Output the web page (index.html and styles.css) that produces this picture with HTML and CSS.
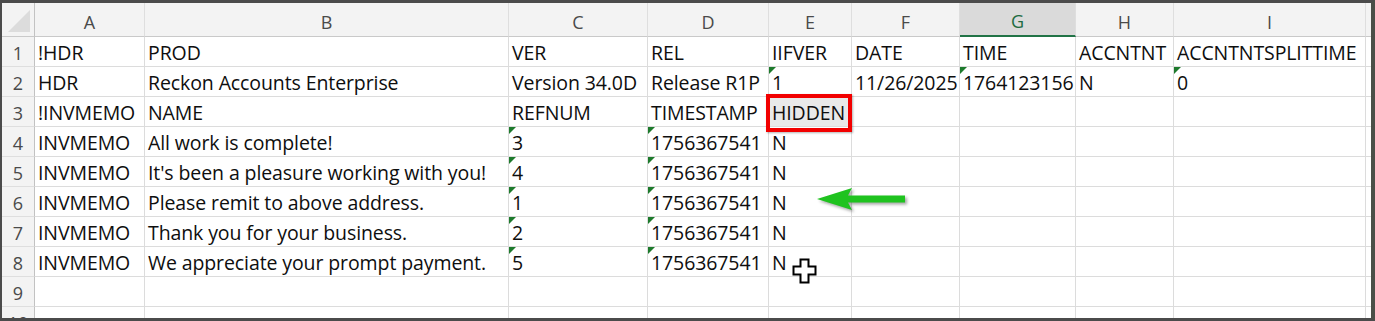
FILE: index.html
```html
<!DOCTYPE html>
<html>
<head>
<meta charset="utf-8">
<link rel="stylesheet" href="styles.css">
</head>
<body>
<div class="frame">
  <div class="sheet">
    <div class="c h corner"></div><div class="c h">A</div><div class="c h">B</div><div class="c h">C</div><div class="c h">D</div><div class="c h">E</div><div class="c h">F</div><div class="c h sel">G</div><div class="c h">H</div><div class="c h">I</div><div class="c h"></div>

    <div class="c rn">1</div><div class="c">!HDR</div><div class="c">PROD</div><div class="c">VER</div><div class="c">REL</div><div class="c">IIFVER</div><div class="c">DATE</div><div class="c">TIME</div><div class="c">ACCNTNT</div><div class="c">ACCNTNTSPLITTIME</div><div class="c"></div>

    <div class="c rn">2</div><div class="c">HDR</div><div class="c">Reckon Accounts Enterprise</div><div class="c">Version 34.0D</div><div class="c">Release R1P</div><div class="c tri">1</div><div class="c">11/26/2025</div><div class="c tri">1764123156</div><div class="c">N</div><div class="c tri">0</div><div class="c"></div>

    <div class="c rn">3</div><div class="c">!INVMEMO</div><div class="c">NAME</div><div class="c">REFNUM</div><div class="c">TIMESTAMP</div><div class="c marked">HIDDEN</div><div class="c"></div><div class="c"></div><div class="c"></div><div class="c"></div><div class="c"></div>

    <div class="c rn">4</div><div class="c">INVMEMO</div><div class="c">All work is complete!</div><div class="c tri">3</div><div class="c tri">1756367541</div><div class="c">N</div><div class="c"></div><div class="c"></div><div class="c"></div><div class="c"></div><div class="c"></div>

    <div class="c rn">5</div><div class="c">INVMEMO</div><div class="c">It's been a pleasure working with you!</div><div class="c tri">4</div><div class="c tri">1756367541</div><div class="c">N</div><div class="c"></div><div class="c"></div><div class="c"></div><div class="c"></div><div class="c"></div>

    <div class="c rn">6</div><div class="c">INVMEMO</div><div class="c">Please remit to above address.</div><div class="c tri">1</div><div class="c tri">1756367541</div><div class="c">N</div><div class="c"></div><div class="c"></div><div class="c"></div><div class="c"></div><div class="c"></div>

    <div class="c rn">7</div><div class="c">INVMEMO</div><div class="c">Thank you for your business.</div><div class="c tri">2</div><div class="c tri">1756367541</div><div class="c">N</div><div class="c"></div><div class="c"></div><div class="c"></div><div class="c"></div><div class="c"></div>

    <div class="c rn">8</div><div class="c">INVMEMO</div><div class="c">We appreciate your prompt payment.</div><div class="c tri">5</div><div class="c tri">1756367541</div><div class="c">N</div><div class="c"></div><div class="c"></div><div class="c"></div><div class="c"></div><div class="c"></div>

    <div class="c rn">9</div><div class="c"></div><div class="c"></div><div class="c"></div><div class="c"></div><div class="c"></div><div class="c"></div><div class="c"></div><div class="c"></div><div class="c"></div><div class="c"></div>

    <div class="c rn">10</div><div class="c"></div><div class="c"></div><div class="c"></div><div class="c"></div><div class="c"></div><div class="c"></div><div class="c"></div><div class="c"></div><div class="c"></div><div class="c"></div>
  </div>

  <div class="redbox"></div>

  <svg class="arrow" width="94" height="30" viewBox="0 0 94 30">
    <path d="M1 13 L36 2 L32 9.5 L89 9.5 L89 16.5 L32 16.5 L36 24 Z" fill="#1fc31f"/>
  </svg>

  <svg class="cursor" width="26" height="27" viewBox="0 0 26 27">
    <path d="M8.5 1.5 H16.5 V8.5 H23.5 V16.5 H16.5 V24.5 H8.5 V16.5 H1.5 V8.5 H8.5 Z" fill="#fff" stroke="#000" stroke-width="2" stroke-linejoin="miter"/>
  </svg>
</div>
</body>
</html>
```

FILE: styles.css
```css
body {
  margin: 0;
  background: #4d4d4d;
}

.frame {
  position: relative;
  width: 1375px;
  height: 321px;
  box-sizing: border-box;
  border-style: solid;
  border-color: #4b4b4b #4a4f48 #4b4b4b #4b4b4b;
  border-width: 3px 4px 3px 2px;
  background: #ffffff;
  overflow: hidden;
}

.sheet {
  display: grid;
  grid-template-columns: 33px 110px 364px 139px 121px 83px 108px 116px 98px 192px 5px;
  grid-template-rows: 34px;
  grid-auto-rows: 30px;
  font-family: "Open Sans", "Noto Sans", sans-serif;
}

.c {
  position: relative;
  box-sizing: border-box;
  display: flex;
  align-items: flex-end;
  padding: 0 3px;
  border-right: 1px solid #dcdcdc;
  border-bottom: 1px solid #dcdcdc;
  font-size: 19.5px;
  line-height: 26px;
  letter-spacing: -0.1px;
  color: #0e0e0e;
  white-space: nowrap;
}

.h {
  background: #f3f3f3;
  align-items: center;
  justify-content: center;
  padding-top: 4px;
  font-size: 18px;
  letter-spacing: 0;
  color: #4a4a4a;
  border-bottom-color: #c9c9c9;
  border-right-color: #dedede;
}

.corner {
  border-right-color: #c2c2c2;
}

.corner::after {
  content: "";
  position: absolute;
  right: 4px;
  bottom: 4px;
  width: 0;
  height: 0;
  border-style: solid;
  border-width: 0 0 22px 22px;
  border-color: transparent transparent #dcdcdc transparent;
}

.sel {
  background: #dadada;
  color: #1e6b40;
  border-bottom: 2px solid #217346;
}

.rn {
  background: #f3f3f3;
  justify-content: center;
  font-size: 18px;
  letter-spacing: 0;
  color: #4a4a4a;
  border-right-color: #c2c2c2;
  border-bottom-color: #dedede;
}

.tri::before {
  content: "";
  position: absolute;
  left: 0;
  top: 0;
  width: 0;
  height: 0;
  border-style: solid;
  border-width: 7px 7px 0 0;
  border-color: #1d7a2c transparent transparent transparent;
}

.marked {
  background: #e9e9e9;
}

.redbox {
  position: absolute;
  left: 764px;
  top: 91px;
  width: 86px;
  height: 38px;
  box-sizing: border-box;
  border: 4px solid #f20000;
  box-shadow: 1px 1px 2px rgba(0, 0, 0, 0.3);
}

.arrow {
  position: absolute;
  left: 814px;
  top: 183px;
  filter: drop-shadow(2px 2px 1.5px rgba(0, 0, 0, 0.35));
}

.cursor {
  position: absolute;
  left: 790px;
  top: 255px;
}
```
